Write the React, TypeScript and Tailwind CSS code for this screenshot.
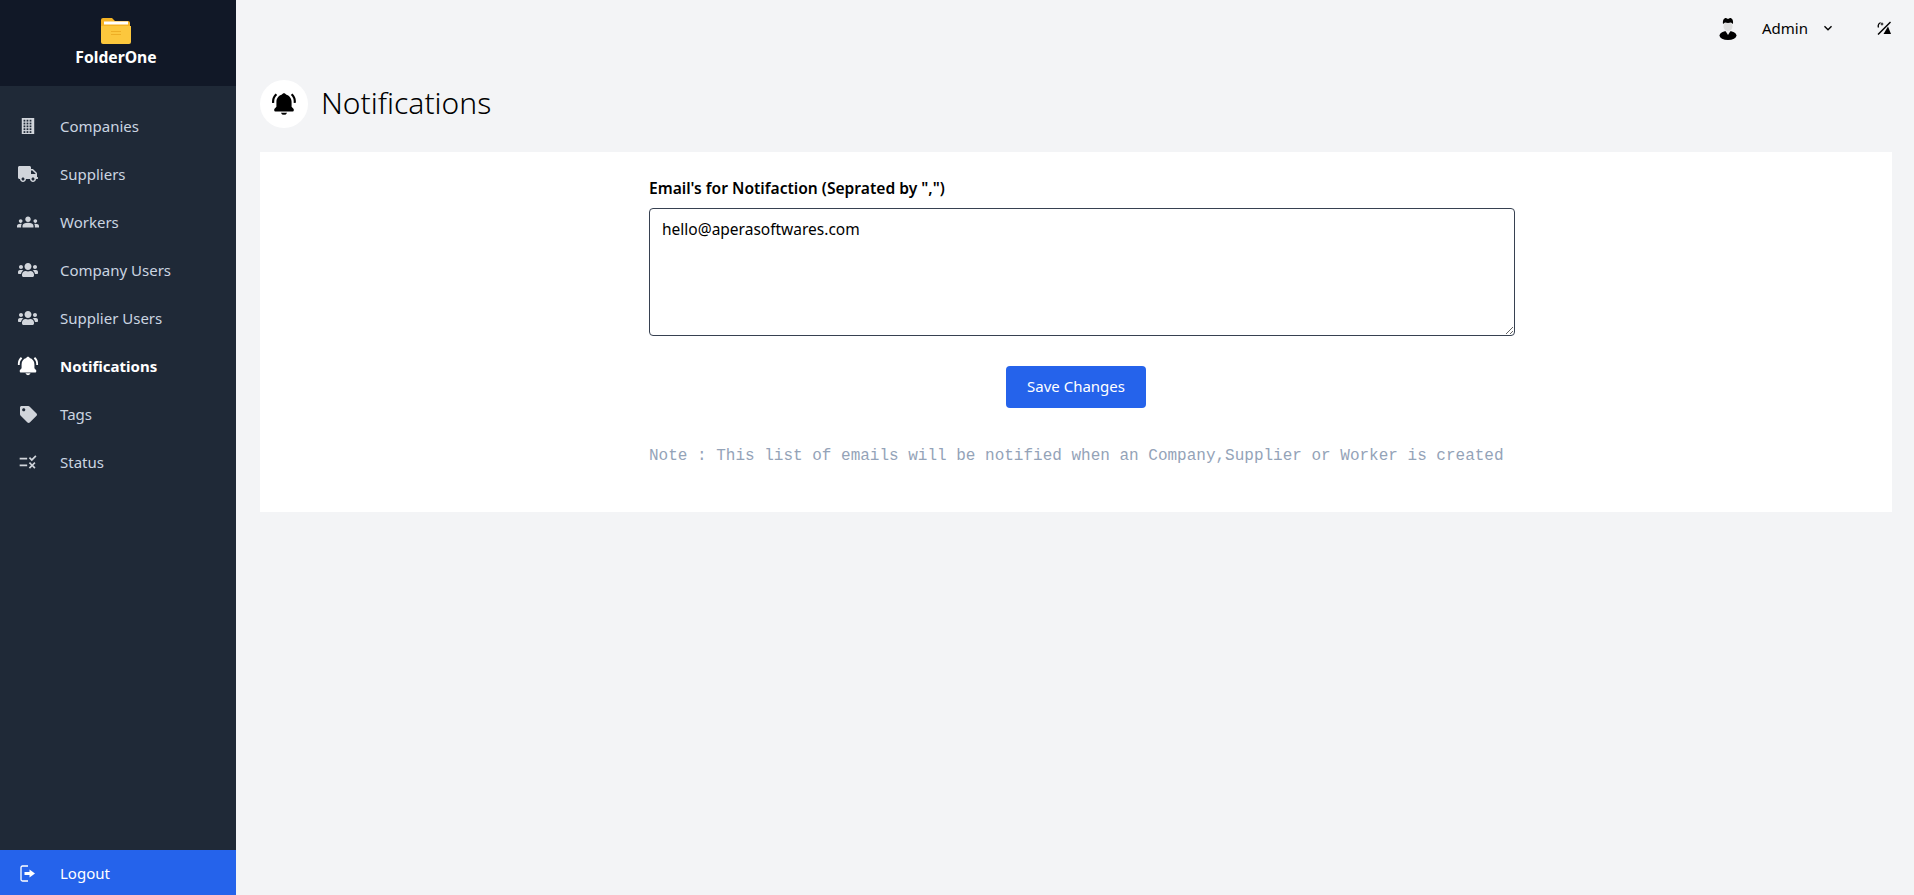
import React from "react";
import { FaTruck, FaUsers, FaTag } from "react-icons/fa";
import { MdGroups, MdRule, MdKeyboardArrowDown } from "react-icons/md";
import { BiSolidBellRing } from "react-icons/bi";

function BuildingIcon({ size = 15 }: { size?: number }) {
  const cells: React.ReactNode[] = [];
  for (let r = 0; r < 5; r++) {
    for (let c = 0; c < 3; c++) {
      cells.push(<rect key={`${r}-${c}`} x={2 + c * 3.4} y={2 + r * 3.2} width="2" height="2" fill="#1f2937" />);
    }
  }
  return (
    <svg width={size - 2} height={size} viewBox="0 0 14 18">
      <rect x="0" y="0" width="14" height="18" fill="currentColor" />
      {cells}
    </svg>
  );
}

function LogoutIcon() {
  return (
    <svg width="16" height="17" viewBox="0 0 16 17" fill="none">
      <path d="M8 1H2.500A1.500 1.500 0 0 0 1 2.500v12A1.500 1.500 0 0 0 2.500 16H8" stroke="currentColor" strokeWidth="1.300" />
      <path d="M4.500 7h5V4.500L15 8.500l-5.500 4V10h-5z" fill="currentColor" />
    </svg>
  );
}

function MoonSlash() {
  return (
    <svg width="15" height="14" viewBox="0 0 15 14" className="mr-[-2px] ml-[41px]">
      <path d="M3.500 1.500C1.500 2.500 .8 4.500 1.500 6.500" stroke="#000" strokeWidth="1.300" fill="none" />
      <path d="M5 1l.6 1.400L7 3l-1.400.6L5 5l-.6-1.400L3 3l1.400-.6z" fill="#000" />
      <path d="M1 13.500L13.500 1" stroke="#000" strokeWidth="1.500" />
      <path d="M11 5.500l3 7.500H6.500z" fill="#000" />
    </svg>
  );
}

const items = [
  { label: "Companies", Icon: BuildingIcon, size: 16 },
  { label: "Suppliers", Icon: FaTruck, size: 20 },
  { label: "Workers", Icon: MdGroups, size: 22 },
  { label: "Company Users", Icon: FaUsers, size: 20 },
  { label: "Supplier Users", Icon: FaUsers, size: 20 },
  { label: "Notifications", Icon: BiSolidBellRing, size: 22, active: true },
  { label: "Tags", Icon: FaTag, size: 17 },
  { label: "Status", Icon: MdRule, size: 20 },
];

function Avatar() {
  return (
    <svg width="18" height="23" viewBox="0 0 18 23">
      <ellipse cx="9" cy="18.500" rx="8.500" ry="4.500" fill="#000" />
      <path d="M6.500 14h5l-2.500 4z" fill="#eee" />
      <circle cx="9" cy="9.500" r="4.500" fill="#ddd" />
      <path d="M4 7C3.500 3 5 1 7 1l2 1 2-1c2 0 3.500 2 3 6l-2-1.500-3 .5-3-.5z" fill="#000" />
    </svg>
  );
}

export default function App() {
  return (
    <div className="flex h-[895px] overflow-hidden bg-[#f3f4f6] font-['Noto_Sans',sans-serif] text-black">
      <aside className="flex w-[236px] shrink-0 flex-col bg-[#1f2937]">
        <div className="flex h-[86px] flex-col items-center bg-[#111827] pt-[18px] pr-[4px]">
          <svg width="30" height="26" viewBox="0 0 30 26">
            <path d="M2 0h9l3 3h13a2 2 0 0 1 2 2v4H0V2a2 2 0 0 1 2-2z" fill="#f5b324" />
            <rect x="3" y="3.500" width="24" height="3" fill="#fff" />
            <path d="M0 8h30v16a2 2 0 0 1-2 2H2a2 2 0 0 1-2-2z" fill="#fcc73d" />
            <path d="M10 13h10v1H10zM10 16h10v1H10z" fill="#eeae25" />
          </svg>
          <div className="mt-[3px] text-[15.700px] leading-5 font-bold text-white">FolderOne</div>
        </div>
        <nav className="flex-1 pt-[16px]">
          {items.map(({ label, Icon, size, active }) => (
            <div key={label} className={`flex h-12 items-center ${active ? "font-bold text-white" : "text-[#cbd5e1]"}`}>
              <span className={`flex w-[60px] shrink-0 justify-center pr-[4px] ${active ? "text-white" : "text-[#d1d5db]"}`}>
                <Icon size={size} />
              </span>
              <span className="text-[15px]">{label}</span>
            </div>
          ))}
        </nav>
        <div className="flex h-[45px] items-center bg-[#2563eb] pt-[2px] text-white">
          <span className="flex w-[60px] shrink-0 justify-center pr-[4px]">
            <LogoutIcon />
          </span>
          <span className="text-[15px]">Logout</span>
        </div>
      </aside>
      <main className="flex min-w-0 flex-1 flex-col pr-[22px] pl-[24px]">
        <header className="flex h-[56px] items-center justify-end pr-[2px]">
          <Avatar />
          <span className="ml-[25px] text-[15px]">Admin</span>
          <MdKeyboardArrowDown size={16} className="ml-[12px]" />
          <MoonSlash />
        </header>
        <div className="mt-[24px] flex items-center">
          <span className="flex h-12 w-12 items-center justify-center rounded-full bg-white">
            <BiSolidBellRing size={26} />
          </span>
          <h1 className="mt-[-2px] ml-[13px] text-[30px] leading-9 font-light">Notifications</h1>
        </div>
        <section className="mt-[24px] flex h-[360px] flex-col items-center bg-white pt-[24px] pl-[12px]">
          <div className="flex w-[866px] flex-col">
            <label className="text-[15.600px] leading-6 font-semibold">Email's for Notifaction (Seprated by ",")</label>
            <textarea
              className="mt-[8px] h-[128px] w-full rounded border border-[#374151] px-3 py-[8px] text-[15.500px] leading-6"
              defaultValue="hello@aperasoftwares.com"
            />
            <div className="mt-[30px] flex justify-center pr-[12px]">
              <button className="h-[42px] w-[140px] rounded bg-[#2563eb] pb-[1px] text-[15px] text-white">Save Changes</button>
            </div>
            <p className="mt-[36px] font-['Liberation_Mono',monospace] text-[16px] leading-6 text-[#94a3b8]">
              Note : This list of emails will be notified when an Company,Supplier or Worker is created
            </p>
          </div>
        </section>
      </main>
    </div>
  );
}
